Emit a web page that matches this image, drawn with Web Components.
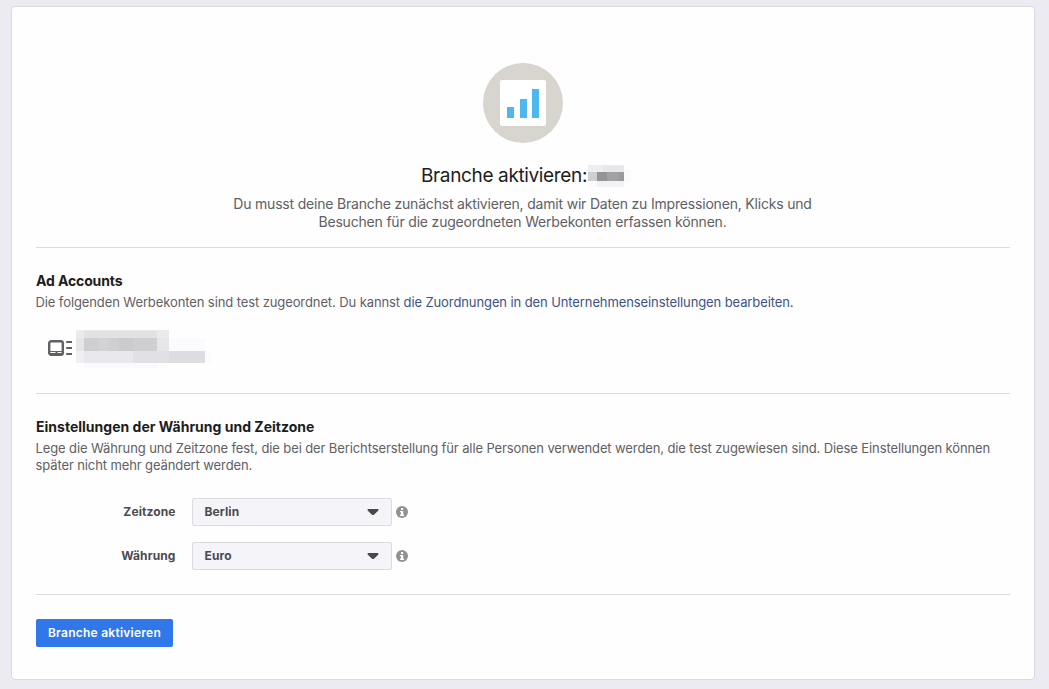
<!DOCTYPE html>
<html lang="de">
<head>
  <meta charset="UTF-8">
  <title>Branche aktivieren</title>
  <style>
    body {
      margin: 0;
      height: 689px;
      overflow: hidden;
      background: #ecebf1;
      font-family: Inter, Roboto, "Liberation Sans", sans-serif;
      color: #606065;
    }
  </style>
</head>
<body>
  <activation-page></activation-page>

  <script>
    class PixelBlur extends HTMLElement {
      constructor() {
        super();
        this.attachShadow({ mode: 'open' });
        const kind = this.getAttribute('kind');
        const shapes = {
          name: {
            w: 44, h: 28,
            rects: [
              [0, 2, 36, 7, '#eeeef0'], [15, 2, 21, 7, '#e8e8ea'],
              [0, 9, 9, 9, '#cfcfd1'], [9, 9, 27, 9, '#a3a1a3'],
              [9, 9, 10, 9, '#959395'], [31, 9, 5, 9, '#9b999b'],
              [0, 18, 36, 6, '#faf9fb'], [9, 18, 27, 6, '#f3f2f5'],
              [36, 6, 6, 13, '#faf9fc']
            ]
          },
          account: {
            w: 136, h: 44,
            rects: [
              [0, 3, 93, 8, '#ebeaec'], [8, 4, 73, 7, '#e2e1e3'],
              [0, 11, 93, 13, '#e6e5e7'], [8, 11, 73, 13, '#cfced0'],
              [23, 11, 9, 13, '#d3d2d4'], [43, 11, 14, 13, '#cbcacc'],
              [0, 24, 129, 12, '#e9e8ed'], [0, 24, 8, 12, '#f0eff3'],
              [57, 24, 72, 12, '#e1e0e5'], [93, 24, 36, 12, '#dddce1'],
              [93, 11, 36, 13, '#fbfafd'], [8, 36, 73, 5, '#fbfafd'],
              [129, 24, 6, 12, '#fbfafd']
            ]
          }
        };
        const s = shapes[kind];
        this.shadowRoot.innerHTML = `
          <style>
            :host { display: block; }
            svg { display: block; }
          </style>
          <svg width="${s.w}" height="${s.h}" shape-rendering="crispEdges">
            ${s.rects.map(([x, y, w, h, c]) => `<rect x="${x}" y="${y}" width="${w}" height="${h}" fill="${c}"/>`).join('')}
          </svg>
        `;
      }
    }

    class BusinessLogo extends HTMLElement {
      constructor() {
        super();
        this.attachShadow({ mode: 'open' });
        this.shadowRoot.innerHTML = `
          <style>
            :host { display: block; height: 80px; }
            svg { display: block; margin: auto; }
          </style>
          <svg width="80" height="80" viewBox="0 0 80 80">
            <circle cx="40" cy="40" r="40" fill="#d8d4ce"/>
            <rect x="17" y="17" width="46" height="46" rx="2" fill="#fff"/>
            <path d="M24 44h7v11h-7zM37 36h7v19h-7zM49 26h7v29h-7z" fill="#4cb8ef"/>
          </svg>
        `;
      }
    }

    class PageSection extends HTMLElement {
      constructor() {
        super();
        this.attachShadow({ mode: 'open' });
        this.shadowRoot.innerHTML = `
          <style>
            :host {
              display: block;
              box-sizing: border-box;
              border-top: 1px solid #dcdbde;
              padding-top: 23px;
            }
            h3 {
              margin: 0;
              font-size: 14px;
              font-weight: 700;
              line-height: 20px;
              color: #1d1d20;
              letter-spacing: var(--heading-spacing, 0);
            }
            ::slotted(p) {
              margin: 3px 0 0 -0.5px;
              font-size: 13px;
              line-height: 17px;
              white-space: nowrap;
            }
          </style>
          <h3>${this.getAttribute('heading')}</h3>
          <slot></slot>
        `;
      }
    }

    class SelectRow extends HTMLElement {
      constructor() {
        super();
        this.attachShadow({ mode: 'open' });
        this.shadowRoot.innerHTML = `
          <style>
            :host {
              display: flex;
              align-items: center;
              height: 28px;
              font-size: 12px;
              font-weight: 700;
              letter-spacing: 0.1px;
              color: #4b4b50;
            }
            .label {
              width: 139.5px;
              margin-right: 16.5px;
              padding-bottom: 2px;
              text-align: right;
            }
            .select {
              box-sizing: border-box;
              display: flex;
              align-items: center;
              justify-content: space-between;
              width: 200px;
              height: 28px;
              padding: 0 12px 0 11.5px;
              border: 1px solid #dcdbe0;
              border-radius: 2px;
              background: #f5f4f9;
            }
            .value { padding-bottom: 2px; }
            .info { margin-left: 4px; }
          </style>
          <span class="label">${this.getAttribute('label')}</span>
          <div class="select">
            <span class="value"><slot></slot></span>
            <svg width="12" height="8" viewBox="0 0 12 8">
              <path d="M1.2 1h9.6q.6 0 .6.8v.6L7 6.7q-1 .8-2 0L.6 2.4v-.6q0-.8.6-.8z" fill="#48484d"/>
            </svg>
          </div>
          <svg class="info" width="12" height="12" viewBox="0 0 12 12">
            <circle cx="6" cy="6" r="6" fill="#929195"/>
            <path d="M5 2h2.2v2H5zM4 4.9h3.2v3.7h.9v1.3H4.1V8.6H5V6.2H4z" fill="#fff"/>
          </svg>
        `;
      }
    }

    class ActivationPage extends HTMLElement {
      constructor() {
        super();
        this.attachShadow({ mode: 'open' });
        this.shadowRoot.innerHTML = `
          <style>
            :host { display: block; padding: 6px 14px 0 11px; }
            .card {
              box-sizing: border-box;
              height: 674px;
              padding: 56px 24px 0;
              border: 1px solid #dad9e1;
              border-radius: 4px;
              background: #fefefe;
            }
            header { height: 184px; }
            .title {
              display: flex;
              justify-content: center;
              align-items: center;
              height: 28px;
              margin: 18px 0 0 7px;
              font-size: 19px;
              font-weight: 400;
              color: #1d1d20;
              letter-spacing: -0.36px;
            }
            .title pixel-blur { margin: 4px 0 0 1px; }
            .intro {
              margin: 6px 1px 0 0;
              text-align: center;
              font-size: 14px;
              line-height: 18px;
              letter-spacing: -0.19px;
              white-space: nowrap;
            }
            .accounts { height: 146px; --heading-spacing: -0.12px; }
            .accounts p { letter-spacing: -0.1px; }
            .settings { height: 201px; --heading-spacing: 0.01px; }
            .settings p { letter-spacing: -0.11px; }
            .link { color: #3c5389; }
            .account {
              display: flex;
              align-items: center;
              height: 44px;
              margin: 16px 0 0 12px;
            }
            .account svg { margin-bottom: 2px; }
            .account pixel-blur { margin-left: 4px; }
            .fields {
              display: grid;
              gap: 16px;
              margin-top: 24px;
            }
            footer {
              padding-top: 24px;
              border-top: 1px solid #dcdbde;
            }
            button {
              display: block;
              width: 137px;
              height: 28px;
              padding: 0 0 1px;
              border: 0;
              border-radius: 2px;
              background: #3077e9;
              color: #fff;
              font: 600 12px Inter, Roboto, sans-serif;
              letter-spacing: 0.25px;
            }
          </style>
          <div class="card">
            <header>
              <business-logo></business-logo>
              <div class="title"><span>Branche aktivieren:</span><pixel-blur kind="name"></pixel-blur></div>
              <p class="intro">Du musst deine Branche zunächst aktivieren, damit wir Daten zu Impressionen, Klicks und<br>Besuchen für die zugeordneten Werbekonten erfassen können.</p>
            </header>
            <page-section class="accounts" heading="Ad Accounts">
              <p>Die folgenden Werbekonten sind test zugeordnet. Du kannst <span class="link">die Zuordnungen in den Unternehmenseinstellungen bearbeiten.</span></p>
              <div class="account">
                <svg width="24" height="18" viewBox="0 0 24 18">
                  <rect x="1.2" y="2.2" width="13.6" height="13.6" rx="2" fill="none" stroke="#616065" stroke-width="2.4"/>
                  <path d="M2 12h12v1H2zM7.5 13h2v1.8h-2zM2 14h12v1.5H2z" fill="#616065"/>
                  <path d="M18.2 3H24M18.2 9H24M18.2 15H24" stroke="#616065" stroke-width="2"/>
                </svg>
                <pixel-blur kind="account"></pixel-blur>
              </div>
            </page-section>
            <page-section class="settings" heading="Einstellungen der Währung und Zeitzone">
              <p>Lege die Währung und Zeitzone fest, die bei der Berichtserstellung für alle Personen verwendet werden, die test zugewiesen sind. Diese Einstellungen können<br>später nicht mehr geändert werden.</p>
              <div class="fields">
                <select-row label="Zeitzone">Berlin</select-row>
                <select-row label="Währung">Euro</select-row>
              </div>
            </page-section>
            <footer><button>Branche aktivieren</button></footer>
          </div>
        `;
      }
    }

    customElements.define('pixel-blur', PixelBlur);
    customElements.define('business-logo', BusinessLogo);
    customElements.define('page-section', PageSection);
    customElements.define('select-row', SelectRow);
    customElements.define('activation-page', ActivationPage);
  </script>
</body>
</html>
